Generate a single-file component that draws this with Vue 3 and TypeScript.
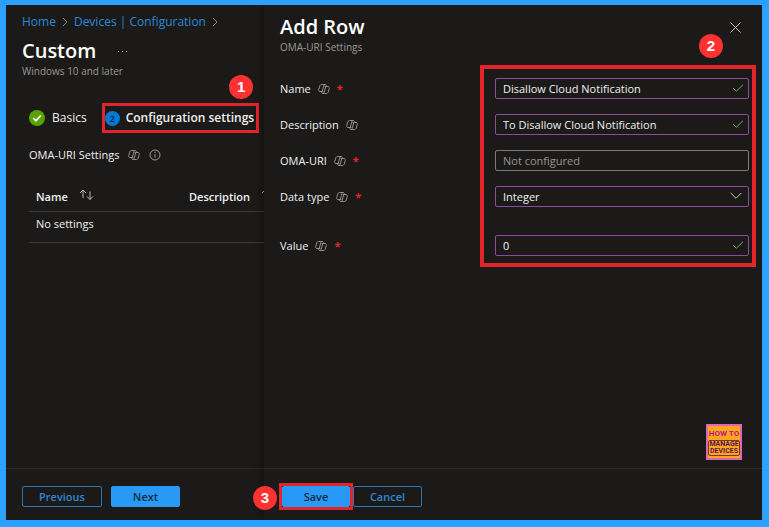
<script setup lang="ts">
import { ref, defineComponent, h } from 'vue'

interface FieldRow {
  id: string
  label: string
  required: boolean
  kind: 'text' | 'select'
  value: string
  placeholder?: string
}

const fields = ref<FieldRow[]>([
  { id: 'name', label: 'Name', required: true, kind: 'text', value: 'Disallow Cloud Notification' },
  { id: 'description', label: 'Description', required: false, kind: 'text', value: 'To Disallow Cloud Notification' },
  { id: 'oma-uri', label: 'OMA-URI', required: true, kind: 'text', value: '', placeholder: 'Not configured' },
  { id: 'data-type', label: 'Data type', required: true, kind: 'select', value: 'Integer' },
  { id: 'value', label: 'Value', required: true, kind: 'text', value: '0' },
])

const CopilotIcon = defineComponent({
  render: () =>
    h('svg', { width: 12, height: 12, viewBox: '0 0 24 24', fill: 'none', stroke: '#8f8f8f', 'stroke-width': 2, 'stroke-linejoin': 'round', 'stroke-linecap': 'round', 'aria-hidden': 'true' }, [
      h('path', { d: 'M10 17H4C1.500 17 1 15 1.500 13L3.500 6C4 4 5.500 3 7.500 3H14C16 3 17 4.500 17 7' }),
      h('path', { d: 'M14 7H20C22.500 7 23 9 22.500 11L20.500 18C20 20 18.500 21 16.500 21H10C8 21 7 19.500 7 17' }),
      h('path', { d: 'M14 3C12.500 3 12 4 11.500 5.500L8.500 17M10 21C11.500 21 12 20 12.500 18.500L15.500 7' }),
    ]),
})
</script>

<template>
  <div class="frame">
    <main class="page">
      <div class="page-body">
        <nav class="crumbs" aria-label="Breadcrumb">
          <a href="#">Home</a>
          <svg class="sep" width="6" height="10" viewBox="0 0 6 10"><path d="M1 1l4 4-4 4" /></svg>
          <a href="#">Devices | Configuration</a>
          <svg class="sep" width="6" height="10" viewBox="0 0 6 10"><path d="M1 1l4 4-4 4" /></svg>
        </nav>
        <div class="title-row">
          <h1>Custom</h1>
          <button class="more" aria-label="More"><i /><i /><i /></button>
        </div>
        <p class="subtitle">Windows 10 and later</p>

        <div class="steps">
          <button class="step">
            <svg width="16" height="16" viewBox="0 0 16 16">
              <circle cx="8" cy="8" r="8" fill="#57a300" />
              <path d="M4.300 8.200l2.600 2.600 4.900-5.300" fill="none" stroke="#fff" stroke-width="1.800" />
            </svg>
            Basics
          </button>
          <button class="step current">
            <span class="num">2</span>
            Configuration settings
            <span class="badge badge-one">1</span>
          </button>
        </div>

        <div class="section-head">
          <span>OMA-URI Settings</span>
          <CopilotIcon />
          <svg width="12" height="12" viewBox="0 0 12 12" fill="none" stroke="#9a9a9a">
            <circle cx="6" cy="6" r="5" />
            <path d="M6 5.200v3.600M6 3v1.200" />
          </svg>
        </div>

        <table class="settings">
          <thead>
            <tr>
              <th class="col-name">
                <span class="th-inner">Name
                  <svg class="sort" width="15" height="12" viewBox="0 0 15 12"><path d="M4 9V1M1 4l3-3 3 3M11 2.500v8M8 7.500l3 3 3-3" /></svg>
                </span>
              </th>
              <th>
                <span class="th-inner">Description
                  <svg class="sort" width="15" height="12" viewBox="0 0 15 12"><path d="M4 9V1M1 4l3-3 3 3M11 2.500v8M8 7.500l3 3 3-3" /></svg>
                </span>
              </th>
            </tr>
          </thead>
          <tbody>
            <tr><td colspan="2">No settings</td></tr>
          </tbody>
        </table>
      </div>
      <footer class="actions">
        <button class="btn wide">Previous</button>
        <button class="btn primary">Next</button>
      </footer>
    </main>

    <section class="blade">
      <header class="blade-head">
        <div>
          <h2>Add Row</h2>
          <p class="subtitle">OMA-URI Settings</p>
        </div>
        <button class="close" aria-label="Close">
          <svg width="11" height="11" viewBox="0 0 11 11"><path d="M.5.5l10 10M10.500.5l-10 10" /></svg>
        </button>
        <span class="badge badge-two">2</span>
      </header>

      <form class="form" @submit.prevent>
        <div v-for="f in fields" :key="f.id" class="row">
          <div class="label">
            <label :for="f.id">{{ f.label }}</label>
            <CopilotIcon />
            <span v-if="f.required" class="req">*</span>
          </div>
          <div class="control">
            <select v-if="f.kind === 'select'" :id="f.id" v-model="f.value" class="input filled">
              <option>Integer</option>
            </select>
            <input v-else :id="f.id" v-model="f.value" type="text" class="input" :class="{ filled: f.value }" :placeholder="f.placeholder" />
            <svg v-if="f.kind === 'select'" class="mark chevron" width="12" height="8" viewBox="0 0 12 8"><path d="M.7 1l5.300 5.300L11.300 1" /></svg>
            <svg v-else-if="f.value" class="mark check" width="12" height="8" viewBox="0 0 12 8"><path d="M1 4l3.300 3.300L11 .7" /></svg>
          </div>
        </div>
        <div class="highlight" />
      </form>

      <div class="logo">
        <span class="logo-top">HOW TO</span>
        <span class="logo-box">MANAGE<br />DEVICES</span>
      </div>

      <footer class="actions">
        <div class="save-wrap">
          <button class="btn primary">Save</button>
          <span class="badge badge-three">3</span>
        </div>
        <button class="btn">Cancel</button>
      </footer>
    </section>
  </div>
</template>

<style>
body {
  margin: 0;
  background: #1b1a19;
}
</style>

<style scoped>
* {
  box-sizing: border-box;
}
.frame {
  display: grid;
  grid-template-columns: 258px minmax(0, 1fr);
  min-height: 100vh;
  border: solid #2ba2ff;
  border-width: 5px 7px 7px 6px;
  background: #1b1a19;
  color: #f0f0f0;
  font: 11px/16px "Open Sans", "Noto Sans", sans-serif;
}
h1,
h2,
p {
  margin: 0;
}
h1,
h2 {
  font-size: 20px;
  line-height: 24px;
  font-weight: 600;
  color: #fff;
}
button {
  font: inherit;
  color: inherit;
  background: none;
  border: 0;
  padding: 0;
}
svg {
  flex: none;
}
.page,
.blade {
  display: flex;
  flex-direction: column;
  min-width: 0;
}
.page {
  overflow: hidden;
}
.page-body {
  flex: 1;
  padding: 9px 0 0 16px;
}
.crumbs {
  display: flex;
  align-items: center;
  gap: 6px;
  font-size: 12px;
}
.crumbs a {
  color: #2b88d8;
  text-decoration: none;
  white-space: nowrap;
}
.sep path {
  fill: none;
  stroke: #8a8a8a;
}
.title-row {
  display: flex;
  align-items: center;
  gap: 22px;
  margin-top: 9px;
}
.more {
  display: flex;
  gap: 3px;
}
.more i {
  width: 1px;
  height: 1px;
  background: #c8c8c8;
}
.subtitle {
  font-size: 10px;
  line-height: 16px;
  color: #9a9896;
}
.steps {
  display: flex;
  gap: 15px;
  margin: 24px 0 14px 7px;
}
.step {
  display: flex;
  align-items: center;
  gap: 7px;
  font-size: 12px;
  white-space: nowrap;
}
.current {
  position: relative;
  gap: 6px;
  height: 30px;
  padding: 0 2px 0 0;
  border: 3px solid #e3242b;
  font-weight: 600;
}
.num {
  width: 15px;
  height: 15px;
  border-radius: 50%;
  background: #0078d4;
  color: #10263b;
  font-size: 9px;
  line-height: 15px;
  text-align: center;
}
.badge {
  position: absolute;
  width: 24px;
  height: 24px;
  border-radius: 50%;
  background: #ff3131;
  color: #fff;
  font: bold 15px/24px "Liberation Sans", sans-serif;
  text-align: center;
}
.badge-one {
  top: -31px;
  right: 3px;
}
.badge-two {
  top: 29px;
  right: 39px;
}
.badge-three {
  top: 0;
  left: -29px;
}
.section-head {
  display: flex;
  align-items: center;
  gap: 9px;
  margin-left: 7px;
}
.settings {
  width: 100%;
  margin: 20px 0 0 7px;
  border-collapse: collapse;
  table-layout: fixed;
  text-align: left;
}
.settings th {
  height: 28px;
  padding: 0 7px;
  border-bottom: 1px solid #3b3a39;
  font-weight: 600;
}
.settings .col-name {
  width: 153px;
}
.settings td {
  padding: 4px 7px 10px;
  border-bottom: 1px solid #3b3a39;
}
.th-inner {
  display: flex;
  align-items: center;
  gap: 11px;
  white-space: nowrap;
}
.sort {
  margin-bottom: 4px;
}
.sort path {
  fill: none;
  stroke: #b8b8b8;
}
.actions {
  display: flex;
  align-items: center;
  height: 52px;
  padding: 4px 16px 0;
  gap: 9px;
  border-top: 1px solid #2c2b2a;
}
.btn {
  width: 69px;
  height: 21px;
  border: 1px solid #2878b8;
  border-radius: 2px;
  color: #2b88d8;
  font-weight: 600;
}
.wide {
  width: 80px;
}
.primary {
  border-color: #2899f5;
  background: #2899f5;
  color: #132c44;
}
.blade {
  position: relative;
  background: #1b1a19;
  box-shadow: -1px 0 8px rgba(0, 0, 0, 0.4);
  clip-path: inset(0 0 0 -12px);
}
.blade-head {
  display: flex;
  justify-content: space-between;
  align-items: flex-start;
  position: relative;
  padding: 10px 21px 0 16px;
}
.close {
  display: flex;
  margin-top: 7px;
}
.close path {
  fill: none;
  stroke: #c8c8c8;
}
.form {
  position: relative;
  display: flex;
  flex-direction: column;
  gap: 15px;
  padding: 23px 13px 0 16px;
}
.row {
  display: grid;
  grid-template-columns: 215px minmax(0, 1fr);
  align-items: center;
}
.row:nth-child(5) {
  margin-top: 13px;
}
.label {
  display: flex;
  align-items: center;
  gap: 7px;
}
.req {
  color: #e3242b;
  font-weight: 700;
}
.control {
  position: relative;
}
.input {
  display: block;
  width: 100%;
  height: 21px;
  padding: 0 7px;
  border: 1px solid #7c7a78;
  border-radius: 2px;
  background: transparent;
  color: #f0f0f0;
  font: inherit;
  appearance: none;
  outline: 0;
}
.input::placeholder {
  color: #979593;
  opacity: 1;
}
.filled {
  border-color: #8d4a9f;
}
.mark {
  position: absolute;
  right: 5px;
  top: 6px;
  fill: none;
  pointer-events: none;
}
.chevron {
  right: 7px;
  stroke: #c8c8c8;
}
.check {
  stroke: #86a84f;
}
.highlight {
  position: absolute;
  top: 10px;
  right: 6px;
  bottom: -11px;
  left: 216px;
  border: 4px solid #e3242b;
  pointer-events: none;
}
.logo {
  display: flex;
  flex-direction: column;
  align-items: center;
  justify-content: center;
  gap: 1px;
  align-self: flex-end;
  width: 36px;
  height: 36px;
  margin: auto 20px 8px 0;
  border: 2px solid #dc68b4;
  background: #ffa51f;
  color: #c0158c;
  font: bold 7px/10px Roboto, sans-serif;
  white-space: nowrap;
}
.logo-top {
  font-size: 8px;
}
.logo-box {
  border: 1px solid #7a3a20;
  border-radius: 2px;
  color: #5a1550;
  line-height: 7px;
  text-align: center;
}
.blade .actions {
  gap: 0;
}
.save-wrap {
  position: relative;
  margin-left: -1px;
  border: 3px solid #e3242b;
}
.save-wrap .btn {
  display: block;
  width: 68px;
}
</style>
